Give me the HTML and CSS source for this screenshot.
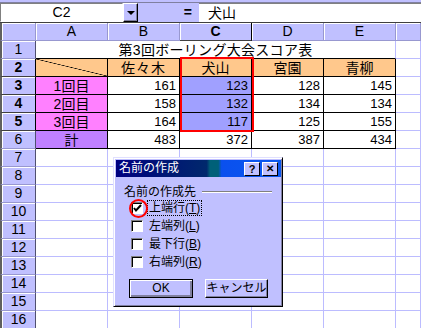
FILE: index.html
```html
<!DOCTYPE html>
<html lang="ja">
<head>
  <meta charset="UTF-8">
  <title>名前の作成</title>
  <link rel="stylesheet" href="styles.css">
</head>
<body>
<div class="app">
  <div class="toolbar-strip"></div>

  <!-- Formula bar -->
  <div class="fbar">
    <div class="namebox">C2</div>
    <div class="drop"><span class="tri"></span></div>
    <div class="eq">=</div>
    <div class="formula">犬山</div>
  </div>

  <!-- Sheet -->
  <div class="sheet">
    <div class="hd corner"></div>
    <div class="hd">A</div><div class="hd">B</div><div class="hd sel">C</div><div class="hd">D</div><div class="hd">E</div><div class="hd"></div>

    <div class="rh">1</div>
    <div class="c title-cell">第3回ボーリング大会スコア表</div>
    <div class="c"></div>

    <div class="rh sel">2</div>
    <div class="c t orange diag"></div>
    <div class="c t orange ctr wide">佐々木</div>
    <div class="c t orange ctr">犬山</div>
    <div class="c t orange ctr">宮園</div>
    <div class="c t orange ctr">青柳</div>
    <div class="c"></div>

    <div class="rh sel">3</div>
    <div class="c t pink ctr">1回目</div>
    <div class="c t num">161</div>
    <div class="c t num hi">123</div>
    <div class="c t num">128</div>
    <div class="c t num">145</div>
    <div class="c"></div>

    <div class="rh sel">4</div>
    <div class="c t pink ctr">2回目</div>
    <div class="c t num">158</div>
    <div class="c t num hi">132</div>
    <div class="c t num">134</div>
    <div class="c t num">134</div>
    <div class="c"></div>

    <div class="rh sel">5</div>
    <div class="c t pink ctr">3回目</div>
    <div class="c t num">164</div>
    <div class="c t num hi">117</div>
    <div class="c t num">125</div>
    <div class="c t num">155</div>
    <div class="c"></div>

    <div class="rh">6</div>
    <div class="c t purple ctr">計</div>
    <div class="c t num">483</div>
    <div class="c t num">372</div>
    <div class="c t num">387</div>
    <div class="c t num">434</div>
    <div class="c"></div>

    <div class="rh">7</div><div class="c"></div><div class="c"></div><div class="c"></div><div class="c"></div><div class="c"></div><div class="c"></div>
    <div class="rh">8</div><div class="c"></div><div class="c"></div><div class="c"></div><div class="c"></div><div class="c"></div><div class="c"></div>
    <div class="rh">9</div><div class="c"></div><div class="c"></div><div class="c"></div><div class="c"></div><div class="c"></div><div class="c"></div>
    <div class="rh">10</div><div class="c"></div><div class="c"></div><div class="c"></div><div class="c"></div><div class="c"></div><div class="c"></div>
    <div class="rh">11</div><div class="c"></div><div class="c"></div><div class="c"></div><div class="c"></div><div class="c"></div><div class="c"></div>
    <div class="rh">12</div><div class="c"></div><div class="c"></div><div class="c"></div><div class="c"></div><div class="c"></div><div class="c"></div>
    <div class="rh">13</div><div class="c"></div><div class="c"></div><div class="c"></div><div class="c"></div><div class="c"></div><div class="c"></div>
    <div class="rh">14</div><div class="c"></div><div class="c"></div><div class="c"></div><div class="c"></div><div class="c"></div><div class="c"></div>
    <div class="rh">15</div><div class="c"></div><div class="c"></div><div class="c"></div><div class="c"></div><div class="c"></div><div class="c"></div>
    <div class="rh">16</div><div class="c"></div><div class="c"></div><div class="c"></div><div class="c"></div><div class="c"></div><div class="c"></div>
  </div>

  <!-- red marker round C2:C5 -->
  <div class="mark-box"></div>

  <!-- Dialog -->
  <div class="dialog">
    <div class="dlg-title">
      <span class="dlg-name">名前の作成</span>
      <span class="tbtn">?</span><span class="tbtn x">✕</span>
    </div>
    <div class="group-label"><span>名前の作成先</span><span class="rule"></span></div>
    <div class="check-row">
      <span class="box"><svg width="9" height="9" viewBox="0 0 9 9"><path d="M1 4 L3 6.5 L8 1" fill="none" stroke="#000" stroke-width="2"/></svg></span>
      <span class="lbl focus">上端行(<u>T</u>)</span>
    </div>
    <div class="check-row"><span class="box"></span><span class="lbl">左端列(<u>L</u>)</span></div>
    <div class="check-row"><span class="box"></span><span class="lbl">最下行(<u>B</u>)</span></div>
    <div class="check-row"><span class="box"></span><span class="lbl">右端列(<u>R</u>)</span></div>
    <div class="btn-row">
      <div class="btn default">OK</div>
      <div class="btn">キャンセル</div>
    </div>
    <div class="mark-circle"></div>
  </div>
</div>
</body>
</html>
```

FILE: styles.css
```css
body {
  margin: 0;
  overflow: hidden;
  font-family: "Liberation Sans", "Noto Sans CJK JP", sans-serif;
  color: #000;
}

.app {
  position: relative;
  width: 421px;
  height: 328px;
  overflow: hidden;
  background: #fff;
}

.toolbar-strip {
  height: 2px;
  background: #c0c0ff;
  border-bottom: 1px solid #8080a0;
}

/* formula bar */
.fbar {
  display: flex;
  height: 19px;
  background: #c0c0ff;
}
.namebox {
  width: 123px;
  box-sizing: border-box;
  background: #fff;
  border: 1px solid;
  border-color: #808080 #fff #fff #808080;
  text-align: center;
  font-size: 14px;
  line-height: 17px;
}
.drop {
  width: 15px;
  box-sizing: border-box;
  border: 1px solid;
  border-color: #fff #000 #000 #fff;
  box-shadow: inset -1px -1px 0 #8080a0;
  display: flex;
  align-items: center;
  justify-content: center;
}
.tri {
  width: 0;
  height: 0;
  border-left: 4px solid transparent;
  border-right: 4px solid transparent;
  border-top: 4px solid #000;
}
.eq {
  width: 61px;
  box-sizing: border-box;
  text-align: right;
  padding-right: 7px;
  font-weight: bold;
  font-size: 14px;
  line-height: 19px;
}
.formula {
  flex: 1;
  background: #fff;
  border-top: 1px solid #808080;
  padding-left: 9px;
  font-size: 14px;
  line-height: 18px;
}

/* sheet */
.sheet {
  display: grid;
  grid-template-columns: 36px repeat(5, 72px) 1fr;
  grid-auto-rows: 18px;
  border-top: 1px solid #404040;
}

.hd, .rh {
  background: #c0c0ff;
  box-sizing: border-box;
  border-right: 1px solid #9898d0;
  border-bottom: 1px solid #9898d0;
  box-shadow: inset 1px 1px 0 #fff;
  text-align: center;
  font-size: 14px;
  line-height: 17px;
}
.rh {
  border-left: 2px solid #606060;
  border-right-color: #505070;
}
.hd.corner {
  border-left: 2px solid #606060;
}
.hd.sel, .rh.sel {
  font-weight: bold;
  border-right-color: #000;
  border-bottom-color: #404040;
}

.c {
  box-sizing: border-box;
  border-right: 1px solid #bcbcff;
  border-bottom: 1px solid #bcbcff;
  padding: 0 3px;
  font-size: 13px;
  line-height: 18px;
  white-space: nowrap;
  overflow: hidden;
}
.title-cell {
  grid-column: span 5;
  text-align: center;
  font-size: 14px;
  letter-spacing: 0.3px;
  border-bottom-color: #000;
}
.t {
  border-right-color: #000;
  border-bottom-color: #000;
}
.ctr { text-align: center; font-size: 14px; }
.wide { letter-spacing: 1px; }
.num { text-align: right; }

.orange { background: #ffc88c; }
.pink { background: #ff80ff; }
.purple { background: #c080ff; }
.hi { background: #a0a0ff; }

.diag {
  background:
    linear-gradient(to top right, transparent calc(50% - 0.6px), #000 50%, transparent calc(50% + 0.6px)),
    #ffc88c;
}

.mark-box {
  position: absolute;
  left: 180px;
  top: 57px;
  width: 74px;
  height: 75px;
  box-sizing: border-box;
  border: 2px solid #f00;
}

/* dialog */
.dialog {
  position: absolute;
  left: 113px;
  top: 157px;
  width: 170px;
  height: 150px;
  box-sizing: border-box;
  padding: 1px;
  background: #c0c0ff;
  border: 1px solid;
  border-color: #e0e0ff #000 #000 #e0e0ff;
  box-shadow: inset 1px 1px 0 #fff, inset -1px -1px 0 #8080a0;
  font-size: 12px;
}
.dlg-title {
  height: 17px;
  margin: 1px 0 0 1px;
  display: flex;
  align-items: center;
  gap: 2px;
  padding: 0 3px;
  color: #fff;
  background: linear-gradient(to right, #000080 0, #00286c 55%, #006078 57%, #006078 62%, #0a50ee 64%, #0a58f0 100%);
}
.dlg-name {
  flex: 1;
  font-size: 12px;
  line-height: 17px;
}
.tbtn {
  width: 16px;
  height: 14px;
  box-sizing: border-box;
  background: #c0c0ff;
  color: #000;
  border: 1px solid;
  border-color: #fff #000 #000 #fff;
  font-size: 11px;
  font-weight: bold;
  line-height: 12px;
  text-align: center;
}
.tbtn.x { font-size: 10px; }

.group-label {
  display: flex;
  align-items: center;
  margin: 8px 9px 0 9px;
  line-height: 14px;
}
.rule {
  flex: 1;
  margin-left: 6px;
  border-top: 1px solid #808080;
  border-bottom: 1px solid #fff;
}

.check-row {
  display: flex;
  align-items: center;
  gap: 5px;
  height: 18px;
  margin-left: 16px;
}
.box {
  width: 12px;
  height: 12px;
  box-sizing: border-box;
  background: #fff;
  border: 1px solid;
  border-color: #808080 #fff #fff #808080;
  box-shadow: inset 1px 1px 0 #000;
  display: flex;
  align-items: center;
  justify-content: center;
}
.lbl {
  line-height: 14px;
  padding: 0 1px;
}
.lbl.focus { outline: 1px dotted #000; }

.btn-row {
  display: flex;
  gap: 12px;
  margin: 8px 0 0 14px;
}
.btn {
  width: 63px;
  height: 19px;
  box-sizing: border-box;
  border: 1px solid;
  border-color: #fff #000 #000 #fff;
  box-shadow: inset -1px -1px 0 #8080a0;
  text-align: center;
  line-height: 17px;
}
.btn.default {
  width: 64px;
  border: 1px solid #000;
  box-shadow: inset 1px 1px 0 #fff, inset -2px -2px 0 #8080a0;
}

.mark-circle {
  position: absolute;
  left: 15px;
  top: 41px;
  width: 19px;
  height: 19px;
  box-sizing: border-box;
  border: 2px solid #f00;
  border-radius: 50%;
}
```
